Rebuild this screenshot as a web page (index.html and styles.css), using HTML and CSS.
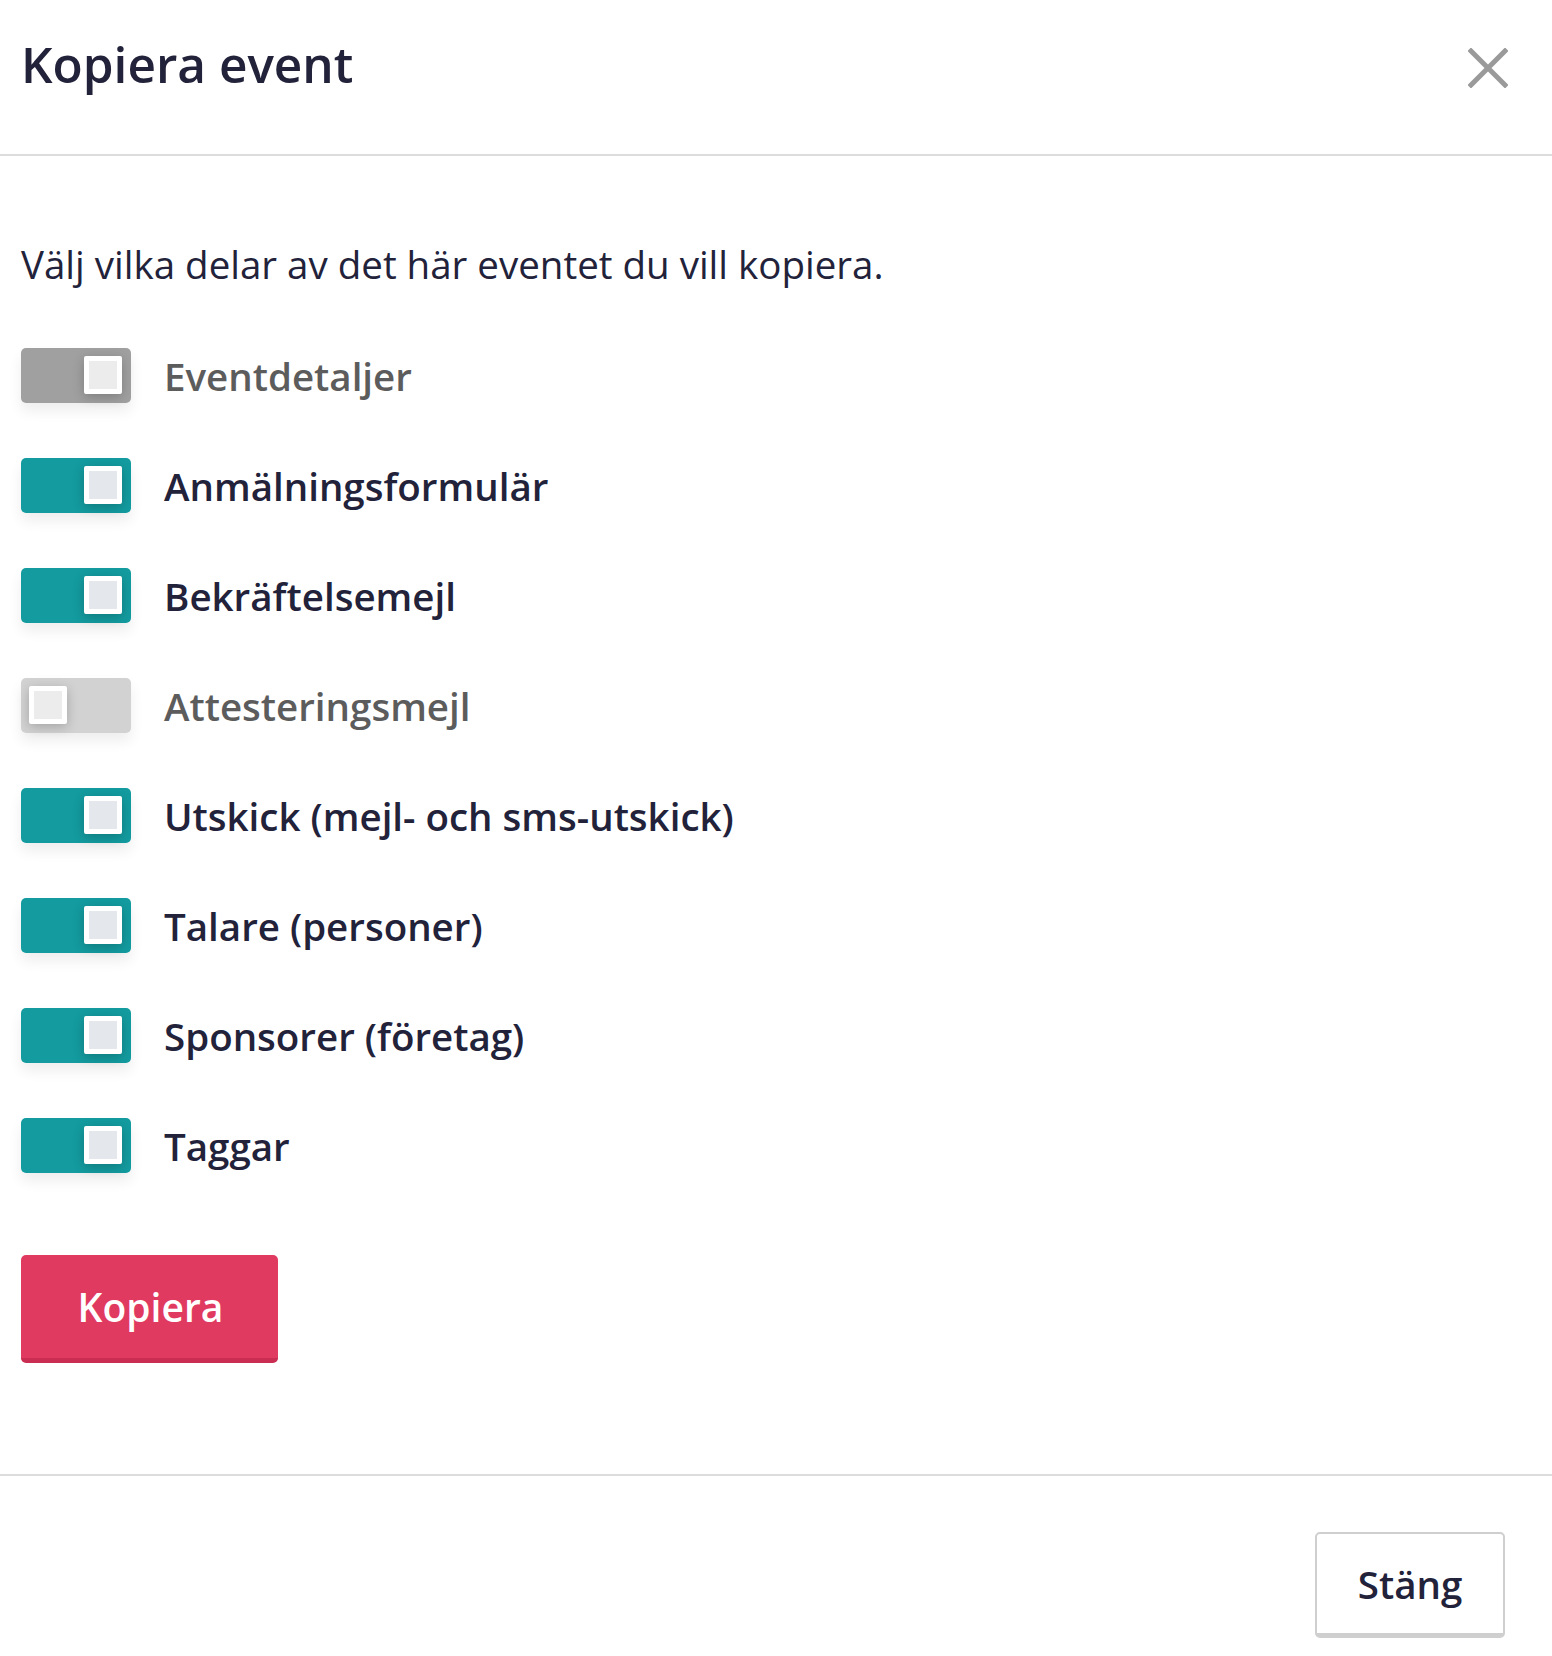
FILE: index.html
```html
<!DOCTYPE html>
<html lang="sv">
<head>
<meta charset="utf-8">
<title>Kopiera event</title>
<link rel="stylesheet" href="styles.css">
</head>
<body>
<div class="modal">
  <header class="modal-header">
    <h1 class="modal-title">Kopiera event</h1>
    <button class="close-btn" aria-label="Stäng">
      <svg width="40" height="40" viewBox="0 0 40 40"><path d="M3 3 L37 37 M37 3 L3 37" stroke="#9a9a9a" stroke-width="5" stroke-linecap="square"/></svg>
    </button>
  </header>
  <main class="modal-body">
    <p class="intro">Välj vilka delar av det här eventet du vill kopiera.</p>
    <ul class="options">
      <li class="option disabled"><span class="toggle on locked"><span class="knob"></span></span><span class="label">Eventdetaljer</span></li>
      <li class="option"><span class="toggle on"><span class="knob"></span></span><span class="label">Anmälningsformulär</span></li>
      <li class="option"><span class="toggle on"><span class="knob"></span></span><span class="label">Bekräftelsemejl</span></li>
      <li class="option disabled"><span class="toggle off"><span class="knob"></span></span><span class="label">Attesteringsmejl</span></li>
      <li class="option"><span class="toggle on"><span class="knob"></span></span><span class="label">Utskick (mejl- och sms-utskick)</span></li>
      <li class="option"><span class="toggle on"><span class="knob"></span></span><span class="label">Talare (personer)</span></li>
      <li class="option"><span class="toggle on"><span class="knob"></span></span><span class="label">Sponsorer (företag)</span></li>
      <li class="option"><span class="toggle on"><span class="knob"></span></span><span class="label">Taggar</span></li>
    </ul>
    <button class="btn-primary">Kopiera</button>
  </main>
  <footer class="modal-footer">
    <button class="btn-secondary">Stäng</button>
  </footer>
</div>
</body>
</html>
```
FILE: styles.css
```css
html, body {
  margin: 0;
  padding: 0;
  background: #ffffff;
}
body {
  font-family: "Open Sans", "Liberation Sans", sans-serif;
  color: #22223a;
}
.modal {
  width: 1552px;
  min-height: 1656px;
  display: flex;
  flex-direction: column;
}
.modal-header {
  box-sizing: border-box;
  height: 156px;
  padding: 30px 44px 0 21px;
  border-bottom: 2px solid #dcdcdc;
  display: flex;
  justify-content: space-between;
  align-items: flex-start;
}
.modal-title {
  margin: 0;
  font-size: 49.5px;
  line-height: 68px;
  font-weight: 600;
  color: #22223a;
}
.close-btn {
  margin-top: 18px;
  padding: 0;
  border: 0;
  background: none;
  width: 40px;
  height: 40px;
  display: block;
}
.close-btn svg { display: block; }
.modal-body {
  padding: 82px 21px 111px;
  display: flex;
  flex-direction: column;
  align-items: flex-start;
}
.intro {
  margin: 0;
  font-size: 38.5px;
  line-height: 52px;
  font-weight: 400;
  color: #22223a;
}
.options {
  list-style: none;
  margin: 58px 0 0;
  padding: 0;
  display: flex;
  flex-direction: column;
  gap: 55px;
}
.option {
  display: flex;
  align-items: center;
  gap: 33px;
  height: 55px;
}
.label {
  font-size: 38.5px;
  font-weight: 600;
  color: #22223a;
  white-space: nowrap;
}
.option.disabled .label {
  color: #5c5c5c;
}
.toggle {
  position: relative;
  box-sizing: border-box;
  width: 110px;
  height: 55px;
  border-radius: 5px;
  display: flex;
  align-items: center;
  padding: 0 9px 0 8px;
  box-shadow: 0 8px 14px rgba(0, 0, 0, 0.07);
}
.toggle.on { background: #139b9f; justify-content: flex-end; }
.toggle.on.locked { background: #a0a0a0; }
.toggle.off { background: #d2d2d2; justify-content: flex-start; }
.knob {
  box-sizing: border-box;
  width: 38px;
  height: 38px;
  margin-top: -1px;
  border: 5px solid #ffffff;
  border-radius: 2px;
  background: #e4e7ec;
  box-shadow: 0 3px 12px rgba(0, 0, 0, 0.22);
}
.toggle.off .knob,
.toggle.locked .knob { background: #ececec; }
.btn-primary {
  margin-top: 82px;
  box-sizing: border-box;
  width: 257px;
  height: 108px;
  border: 0;
  border-bottom: 5px solid #c92e52;
  border-radius: 5px;
  background: #e13a60;
  color: #ffffff;
  font-family: "Open Sans", "Liberation Sans", sans-serif;
  font-size: 39px;
  font-weight: 600;
  padding: 0 0 0 2px;
}
.modal-footer {
  border-top: 2px solid #dcdcdc;
  padding: 56px 47px 18px 0;
  display: flex;
  justify-content: flex-end;
}
.btn-secondary {
  box-sizing: border-box;
  width: 190px;
  height: 106px;
  background: #ffffff;
  border: 2px solid #cfcfcf;
  border-bottom: 5px solid #cfcfcf;
  border-radius: 5px;
  color: #22223a;
  font-family: "Open Sans", "Liberation Sans", sans-serif;
  font-size: 38.5px;
  font-weight: 600;
  padding: 0;
}
```
